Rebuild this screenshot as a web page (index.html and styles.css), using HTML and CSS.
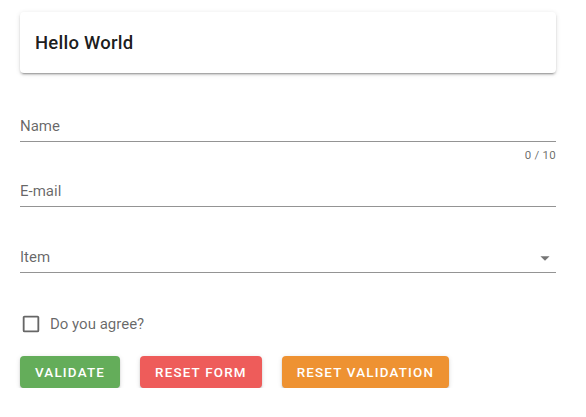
FILE: index.html
```html
<!DOCTYPE html>
<html lang="en">
<head>
<meta charset="utf-8">
<title>Form</title>
<link rel="stylesheet" href="styles.css">
</head>
<body>
<div class="app">
  <div class="card">
    <div class="card-title">Hello World</div>
  </div>
  <form class="form">
    <div class="field">
      <div class="slot"><label class="label">Name</label></div>
      <div class="details"><span class="counter">0 / 10</span></div>
    </div>
    <div class="field">
      <div class="slot"><label class="label">E-mail</label></div>
      <div class="details"></div>
    </div>
    <div class="field field-select">
      <div class="slot">
        <label class="label">Item</label>
        <svg class="arrow" viewBox="0 0 24 24" width="24" height="24"><path d="M7,10L12,15L17,10H7Z"/></svg>
      </div>
      <div class="details"></div>
    </div>
    <div class="checkbox-row">
      <svg class="checkbox" viewBox="0 0 24 24" width="22" height="22"><path d="M19,3H5C3.89,3 3,3.89 3,5V19A2,2 0 0,0 5,21H19A2,2 0 0,0 21,19V5C21,3.89 20.1,3 19,3M19,5V19H5V5H19Z"/></svg>
      <span class="checkbox-label">Do you agree?</span>
    </div>
    <div class="actions">
      <button type="button" class="btn btn-success">Validate</button>
      <button type="button" class="btn btn-error">Reset Form</button>
      <button type="button" class="btn btn-warning">Reset Validation</button>
    </div>
  </form>
</div>
</body>
</html>
```

FILE: styles.css
```css
* { box-sizing: border-box; }
html, body { margin: 0; padding: 0; background: #fff; }
body {
  font-family: Roboto, "Liberation Sans", sans-serif;
  color: rgba(0,0,0,0.87);
}
.app {
  padding: 12px 30px 0 20px;
}
.card {
  height: 61px;
  border-radius: 4px;
  background: #fff;
  box-shadow: 0 3px 1px -2px rgba(0,0,0,.2), 0 2px 2px 0 rgba(0,0,0,.14), 0 1px 5px 0 rgba(0,0,0,.12);
  display: flex;
  align-items: center;
  padding: 0 15px;
}
.card-title {
  font-size: 18.5px;
  font-weight: 500;
  letter-spacing: 0.0125em;
  line-height: 24px;
  margin-top: 1px;
  color: rgba(0,0,0,0.9);
}
.form {
  margin-top: 36px;
  display: flex;
  flex-direction: column;
}
.slot {
  height: 33px;
  border-bottom: 1px solid rgba(0,0,0,0.42);
  display: flex;
  align-items: center;
  justify-content: space-between;
}
.label {
  font-size: 15px;
  line-height: 20px;
  color: rgba(0,0,0,0.6);
  margin-top: 1px;
}
.arrow {
  fill: rgba(0,0,0,0.54);
  width: 22px;
  height: 22px;
  margin-top: 3px;
}
.details {
  height: 32px;
  display: flex;
  justify-content: flex-end;
  padding-top: 6px;
}
.field-select { margin-top: 1px; }
.counter {
  font-size: 11.5px;
  line-height: 14px;
  color: rgba(0,0,0,0.6);
  letter-spacing: 0.02em;
}
.checkbox-row {
  display: flex;
  align-items: center;
  height: 22px;
  margin-top: 8px;
}
.checkbox {
  fill: rgba(0,0,0,0.6);
  flex: none;
}
.checkbox-label {
  margin-left: 8px;
  font-size: 15px;
  line-height: 22px;
  color: rgba(0,0,0,0.6);
}
.actions {
  display: flex;
  gap: 20px;
  margin-top: 21px;
}
.btn {
  height: 32px;
  padding: 0 15px;
  border: none;
  border-radius: 4px;
  color: #fff;
  font-family: Roboto, "Liberation Sans", sans-serif;
  font-size: 13.4px;
  font-weight: 500;
  letter-spacing: 0.0892em;
  text-transform: uppercase;
  box-shadow: 0 3px 1px -2px rgba(0,0,0,.2), 0 2px 2px 0 rgba(0,0,0,.14), 0 1px 5px 0 rgba(0,0,0,.12);
  cursor: pointer;
}
.btn-success { background: #64ad5a; }
.btn-error { background: #ee5c5a; }
.btn-warning { background: #ee9232; }
```
